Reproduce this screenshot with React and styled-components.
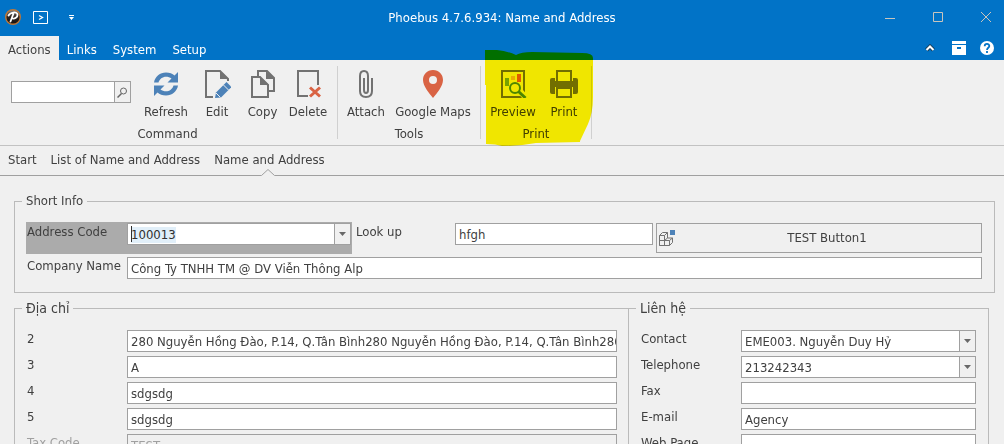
import React, { useEffect, useRef } from "react";
import styled, { createGlobalStyle, css } from "styled-components";

const blue = "#0173c7";
const panel = "#f0f0f0";
const line = "#a0a0a0";
const frame = "#bababa";
const ink = "#404040";
const iconGray = "#727272";
const iconBlue = "#4d82b8";
const iconRed = "#d96344";

const GlobalStyle = createGlobalStyle`
  *, *::before, *::after { box-sizing: border-box; }
  body { margin: 0; background: ${panel}; }
  body, button, input, select {
    font-family: "DejaVu Sans Condensed", "Noto Sans", sans-serif;
    font-size: 13px;
    line-height: 16px;
    color: ${ink};
  }
  button { border: 0; padding: 0; background: none; cursor: pointer; }
  svg { display: block; flex: none; }
`;

const Window = styled.div`
  display: flex;
  flex-direction: column;
  height: 100vh;
  overflow: hidden;
  background: ${panel};
`;

const TitleBar = styled.header`
  display: grid;
  grid-template-columns: 1fr auto 1fr;
  align-items: center;
  height: 36px;
  flex: none;
  padding-bottom: 2px;
  background: ${blue};
  color: #fff;
`;

const QuickAccess = styled.div`
  display: flex;
  align-items: center;
  padding-left: 5px;
`;

const QuickButton = styled.button`
  display: flex;
  margin-left: ${(p) => p.$gap || 0}px;
  color: #fff;
`;

const WindowTitle = styled.h1`
  margin: 0;
  padding-top: 2px;
  font-size: 13px;
  font-weight: 400;
`;

const WindowButtons = styled.div`
  display: flex;
  justify-content: flex-end;
  gap: 12px;
`;

const WindowButton = styled.button`
  display: flex;
  justify-content: center;
  align-items: center;
  width: 36px;
  height: 32px;
  color: #c9c5bd;
`;

const TabBar = styled.nav`
  display: flex;
  height: 24px;
  flex: none;
  background: ${blue};
`;

const Tab = styled.button`
  padding: 3px 8px 0;
  color: #fff;
  ${(p) =>
    p.$active &&
    css`
      background: ${panel};
      color: ${ink};
    `}
`;

const TabTools = styled.div`
  display: flex;
  align-items: center;
  gap: 14px;
  margin-left: auto;
  padding-right: 10px;
`;

const Ribbon = styled.section`
  display: flex;
  height: 86px;
  flex: none;
  padding-top: 6px;
  border-bottom: 1px solid #c2c2c2;
`;

const Group = styled.div`
  position: relative;
  display: flex;
  flex-direction: column;
  height: 73px;
  padding: 0 4px 0 ${(p) => p.$pad}px;
  border-right: 1px solid #d0d0d0;
`;

const GroupItems = styled.div`
  display: flex;
  flex: none;
  height: 60px;
`;

const GroupLabel = styled.div`
  text-align: center;
`;

const RibbonButton = styled.button`
  display: flex;
  flex-direction: column;
  align-items: center;
  width: ${(p) => p.$width}px;
  padding-top: 4px;
  gap: 6px;
  white-space: nowrap;
`;

const SearchBox = styled.div`
  display: flex;
  width: 120px;
  height: 22px;
  margin: 15px 9px 0;
  border: 1px solid ${line};
`;

const SearchInput = styled.input`
  flex: 1;
  min-width: 0;
  border: 0;
  padding: 0 4px;
  outline: 0;
  background: #fff;
`;

const EndButton = styled.button`
  display: flex;
  justify-content: center;
  align-items: center;
  width: 16px;
  flex: none;
  border-left: 1px solid ${line};
  background: ${panel};
`;

const Marker = styled.svg`
  position: absolute;
  left: 3px;
  top: -17px;
  mix-blend-mode: multiply;
  pointer-events: none;
`;

const Pages = styled.nav`
  display: flex;
  gap: 14px;
  height: 30px;
  flex: none;
  padding: 6px 8px 0;
  border-bottom: 1px solid ${line};
`;

const PageLink = styled.a`
  position: relative;
  color: ${ink};
  text-decoration: none;
`;

const Pointer = styled.svg`
  position: absolute;
  left: 50%;
  bottom: -1px;
  margin-left: -8px;
`;

const Form = styled.main`
  padding: 17px 9px 0 14px;
`;

const Frame = styled.fieldset`
  min-width: 0;
  margin: 0;
  border: 1px solid ${frame};
  padding: 13px 12px 13px 11px;
`;

const Legend = styled.legend`
  padding: 0 4px;
  margin-left: -4px;
  font-size: ${(p) => (p.$large ? 14 : 13)}px;
`;

const TopRow = styled.div`
  display: grid;
  grid-template-columns: 326fr 298fr 326fr;
  gap: 3px;
  margin-bottom: 3px;
`;

const Columns = styled.div`
  display: grid;
  grid-template-columns: 614fr 361fr;
  margin: 7px 6px 0 0;
`;

const LeftFrame = styled(Frame)`
  padding: 14px 11px 14px 11px;
  border-right: 0;
`;

const RightFrame = styled(Frame)`
  padding: 14px 12px 14px 11px;
`;

const Rows = styled.div`
  display: grid;
  gap: 4px;
`;

const Field = styled.div`
  display: flex;
  align-items: flex-start;
  min-width: 0;
  ${(p) =>
    p.$current &&
    css`
      padding: 1px 1px 9px 0;
      background: #ababab;
    `}
  ${(p) => p.$inset && "padding-top: 1px;"}
`;

const Label = styled.label`
  width: ${(p) => p.$width || 101}px;
  flex: none;
  padding: 1px 0 0 1px;
  white-space: nowrap;
  color: ${(p) => (p.$muted ? "#a0a0a0" : ink)};
`;

const Control = styled.div`
  position: relative;
  display: flex;
  flex: 1;
  min-width: 0;
  height: 22px;
  border: 1px solid ${line};
  background: ${(p) => (p.$muted ? panel : "#fff")};
`;

const TextInput = styled.input`
  flex: 1;
  width: 100%;
  min-width: 0;
  border: 0;
  padding: 1px 0 0 3px;
  outline: 0;
  background: transparent;
  &::selection { background: #e1eff9; color: #303030; }
  &:disabled { color: #a0a0a0; }
`;

const TextCaret = styled.span`
  position: absolute;
  left: 3px;
  top: 2px;
  width: 1px;
  height: 16px;
  background: #303030;
`;

const Select = styled.select`
  appearance: none;
  flex: 1;
  width: 100%;
  border: 0;
  border-radius: 0;
  outline: 0;
  padding: 1px 20px 0 3px;
  background: transparent;
`;

const SelectArrow = styled.span`
  position: absolute;
  right: 0;
  top: 0;
  bottom: 0;
  display: flex;
  justify-content: center;
  align-items: center;
  width: 16px;
  border-left: 1px solid ${line};
  background: ${panel};
  pointer-events: none;
`;

const CommandButton = styled.button`
  display: grid;
  grid-template-columns: 16px 1fr;
  align-items: center;
  height: 30px;
  margin-top: 1px;
  padding: 0 2px;
  border: 1px solid ${line};
`;

const DownArrow = () => (
  <svg width="7" height="4" viewBox="0 0 7 4"><path d="M0 0h7L3.500 4z" fill="#686868" /></svg>
);

const icons = {
  refresh: (
    <svg width="28" height="28" viewBox="0 0 28 28" fill={iconBlue}>
      <path d="M2 12.500C3 6.500 8 2.500 14 2.500c3.500 0 6.500 1.200 8.500 3L26 2v10.500H15.500l4-4C18 7.300 16 6.700 14 6.700c-3.500 0-6.500 2.300-7.500 5.800z" />
      <path d="M26 15.500c-1 6-6 10-12 10-3.500 0-6.500-1.200-8.500-3L2 26V15.500h10.500l-4 4c1.500 1.200 3.500 1.800 5.500 1.800 3.500 0 6.500-2.300 7.500-5.800z" />
    </svg>
  ),
  edit: (
    <svg width="28" height="28" viewBox="0 0 28 28">
      <path d="M10 27H3V1h14l8 8v2" fill="none" stroke={iconGray} strokeWidth="2" />
      <path d="M17 1v8h9z" fill={iconGray} />
      <path d="M12 28l1-5.500L23.500 12l5 5L18 27.500z" fill={iconBlue} />
      <path d="M20.500 15l5 5M13 23l4.500 4.500" stroke={panel} strokeWidth="1" />
    </svg>
  ),
  copy: (
    <svg width="28" height="28" viewBox="0 0 28 28">
      <path d="M9 7V1h9l7 7v13h-6" fill="none" stroke={iconGray} strokeWidth="2" />
      <path d="M17 1v8h9z" fill={iconGray} />
      <path d="M3 7h8l8 8v12H3z" fill={panel} stroke={iconGray} strokeWidth="2" />
      <path d="M11 7v8h9z" fill={iconGray} />
    </svg>
  ),
  remove: (
    <svg width="28" height="28" viewBox="0 0 28 28">
      <path d="M14 26H4V1h20v14" fill="none" stroke={iconGray} strokeWidth="2" />
      <path d="M16 17.500l10 9M26 17.500l-10 9" stroke={iconRed} strokeWidth="3" />
    </svg>
  ),
  attach: (
    <svg width="28" height="28" viewBox="0 0 28 28" fill="none" stroke={iconGray} strokeWidth="2">
      <path d="M20 8v13c0 4-2 6-6 6s-6-2-6-6V6c0-3 1-5 4-5s4 2 4 5v14c0 4-4 4-4 0V8" />
    </svg>
  ),
  map: (
    <svg width="28" height="28" viewBox="0 0 28 28">
      <path fillRule="evenodd" d="M14 0C8 0 4 4.500 4 10c0 6 6 13 10 18 4-5 10-12 10-18C24 4.500 20 0 14 0zm0 6a4 4 0 1 1 0 8 4 4 0 0 1 0-8z" fill={iconRed} />
    </svg>
  ),
  preview: (
    <svg width="28" height="28" viewBox="0 0 28 28">
      <path d="M3 1h22v26H3z" fill="none" stroke={iconGray} strokeWidth="2" />
      <path d="M6 8h4v8H6z" fill="#76a83c" />
      <path d="M12 6h4v4h-4z" fill="#e9b527" />
      <path d="M18 4h4v8h-4z" fill="#e0603c" />
      <path d="M20 20l8 9" stroke="#f0f0f0" strokeWidth="6" />
      <circle cx="16" cy="18" r="5" fill="#f0f0f0" stroke="#4d8c3c" strokeWidth="2" />
      <path d="M19.500 21.500l7 6.500" stroke="#4d8c3c" strokeWidth="3" />
    </svg>
  ),
  print: (
    <svg width="28" height="28" viewBox="0 0 28 28">
      <path d="M0 10q0-2 2-2h24q2 0 2 2v12q0 2-2 2H2q-2 0-2-2z" fill={iconGray} />
      <path d="M5 0h18v11H5zM5 17h18v11H5z" fill={panel} />
      <path d="M7 12V1h14v11M7 18h14v9H7z" fill={panel} stroke={iconGray} strokeWidth="2" />
      <path d="M5 11h18v6H5z" fill={iconGray} />
    </svg>
  ),
};

const groups = [
  {
    label: "Command",
    pad: 2,
    search: true,
    items: [["Refresh", "refresh", 52], ["Edit", "edit", 50], ["Copy", "copy", 41], ["Delete", "remove", 50]],
  },
  { label: "Tools", pad: 4, items: [["Attach", "attach", 48], ["Google Maps", "map", 86]] },
  { label: "Print", pad: 4, marked: true, items: [["Preview", "preview", 56], ["Print", "print", 46]] },
];

const longAddress = "280 Nguyễn Hồng Đào, P.14, Q.Tân Bình";

const addressRows = [
  { label: "2", value: longAddress + longAddress + "280" },
  { label: "3", value: "A" },
  { label: "4", value: "sdgsdg" },
  { label: "5", value: "sdgsdg" },
  { label: "Tax Code", value: "TEST", muted: true },
];

const contactRows = [
  { label: "Contact", value: "EME003. Nguyễn Duy Hỷ", select: true },
  { label: "Telephone", value: "213242343", select: true },
  { label: "Fax", value: "" },
  { label: "E-mail", value: "Agency" },
  { label: "Web Page", value: "" },
];

function FormField({ id, label, value, select, muted, inset, labelWidth }) {
  return (
    <Field $inset={inset}>
      <Label htmlFor={id} $muted={muted} $width={labelWidth}>{label}</Label>
      <Control $muted={muted}>
        {select ? (
          <>
            <Select id={id} defaultValue={value}><option>{value}</option></Select>
            <SelectArrow><DownArrow /></SelectArrow>
          </>
        ) : (
          <TextInput id={id} defaultValue={value} disabled={muted} />
        )}
      </Control>
    </Field>
  );
}

function AddressCode() {
  const ref = useRef(null);
  useEffect(() => {
    ref.current.focus();
    ref.current.select();
  }, []);
  return (
    <Field $current>
      <Label htmlFor="code">Address Code</Label>
      <Control>
        <TextInput id="code" ref={ref} role="combobox" aria-expanded="false" defaultValue="100013" />
        <TextCaret />
        <EndButton aria-label="Open list"><DownArrow /></EndButton>
      </Control>
    </Field>
  );
}

export default function App() {
  return (
    <Window>
      <GlobalStyle />
      <TitleBar>
        <QuickAccess>
          <svg width="16" height="16" viewBox="0 0 16 16">
            <defs>
              <linearGradient id="ball" x1="0" y1="0" x2="0" y2="1">
                <stop offset="0" stopColor="#8a8a8a" />
                <stop offset=".5" stopColor="#2c2420" />
                <stop offset="1" stopColor="#151010" />
              </linearGradient>
            </defs>
            <circle cx="8" cy="8" r="7.300" fill="url(#ball)" stroke="#c07838" strokeWidth="1.400" />
            <path d="M3.500 6.500C5 3.500 12 2 12.500 5.500 12.800 8.500 9.500 10 7.500 9.500M8.500 4.500L5.500 12.500" fill="none" stroke="#fff" strokeWidth="1.800" strokeLinecap="round" />
          </svg>
          <QuickButton $gap={12} aria-label="Run">
            <svg width="15" height="13" viewBox="0 0 15 13" fill="none" stroke="#fff">
              <path d="M.5.5h14v12H.5z" />
              <path d="M6 4.500l3.500 2-3.500 2" strokeWidth="1.300" />
            </svg>
          </QuickButton>
          <QuickButton $gap={21} aria-label="Customize toolbar">
            <svg width="5" height="5" viewBox="0 0 5 5" fill="#fff"><path d="M0 0h5v1H0zM0 2h5L2.500 5z" /></svg>
          </QuickButton>
        </QuickAccess>
        <WindowTitle>Phoebus 4.7.6.934: Name and Address</WindowTitle>
        <WindowButtons>
          <WindowButton aria-label="Minimize">
            <svg width="10" height="10" stroke="currentColor"><path d="M0 6.500h10" /></svg>
          </WindowButton>
          <WindowButton aria-label="Maximize">
            <svg width="10" height="10" fill="none" stroke="currentColor"><path d="M.5.5h9v9h-9z" /></svg>
          </WindowButton>
          <WindowButton aria-label="Close">
            <svg width="10" height="10" stroke="currentColor"><path d="M0 0l10 10M10 0L0 10" /></svg>
          </WindowButton>
        </WindowButtons>
      </TitleBar>

      <TabBar>
        <Tab $active>Actions</Tab>
        <Tab>Links</Tab>
        <Tab>System</Tab>
        <Tab>Setup</Tab>
        <TabTools>
          <QuickButton aria-label="Collapse ribbon">
            <svg width="10" height="8" viewBox="0 0 10 8" fill="none">
              <path d="M1.500 6L5 2.500 8.500 6" stroke="#16405f" strokeWidth="4" />
              <path d="M1.500 6L5 2.500 8.500 6" stroke="#fff" strokeWidth="2" />
            </svg>
          </QuickButton>
          <QuickButton $gap={3} aria-label="Archive">
            <svg width="14" height="14" viewBox="0 0 14 14" fill="#fff">
              <path d="M0 0h14v3H0zM0 4h14v10H0z" /><path d="M5 6h4v2H5z" fill={blue} />
            </svg>
          </QuickButton>
          <QuickButton aria-label="Help">
            <svg width="14" height="14" viewBox="0 0 14 14">
              <circle cx="7" cy="7" r="7" fill="#fff" />
              <path d="M4.700 5.300C4.700 2.200 9.300 2.300 9.300 5 9.300 6.800 7 6.800 7 9M7 10v2" fill="none" stroke={blue} strokeWidth="1.800" />
            </svg>
          </QuickButton>
        </TabTools>
      </TabBar>

      <Ribbon>
        {groups.map((group) => (
          <Group key={group.label} $pad={group.pad}>
            <GroupItems>
              {group.search && (
                <SearchBox>
                  <SearchInput aria-label="Search" />
                  <EndButton aria-label="Find">
                    <svg width="11" height="11" viewBox="0 0 11 11" fill="none" stroke="#666">
                      <circle cx="6.500" cy="4" r="3" /><path d="M4.500 6.500L.5 10.500" strokeWidth="1.500" />
                    </svg>
                  </EndButton>
                </SearchBox>
              )}
              {group.items.map(([label, icon, width]) => (
                <RibbonButton key={label} $width={width}>{icons[icon]}{label}</RibbonButton>
              ))}
            </GroupItems>
            <GroupLabel>{group.label}</GroupLabel>
            {group.marked && (
              <Marker width="110" height="98" viewBox="0 0 110 98" aria-hidden="true">
                <path
                  d="M1 1H13Q23 2 32 6Q37 3 48 3L98 4Q109 4 109 9V48Q109 64 104 75L96 92V93L52 94Q36 97 18 97Q12 95 2 95V36H1Z"
                  fill="#fff500"
                />
              </Marker>
            )}
          </Group>
        ))}
      </Ribbon>

      <Pages>
        <PageLink href="#start">Start</PageLink>
        <PageLink href="#list">List of Name and Address</PageLink>
        <PageLink href="#address" aria-current="page">
          Name and Address
          <Pointer width="14" height="7" viewBox="0 0 14 7">
            <path d="M0 7L7 0l7 7z" fill={panel} />
            <path d="M.5 6.500L7 .5l6.500 6" fill="none" stroke={line} />
          </Pointer>
        </PageLink>
      </Pages>

      <Form>
        <Frame>
          <Legend>Short Info</Legend>
          <TopRow>
            <AddressCode />
            <FormField id="lookup" label="Look up" value="hfgh" labelWidth={100} inset />
            <CommandButton>
              <svg width="16" height="16" viewBox="0 0 16 16" fill="none" stroke={iconGray}>
                <path d="M.5 5.500h5v10h-5zM.5 10.500h10v5h-10M5.500 10.500l3-2.500h5l-3 2.500M.5 5.500l3-3h5l-3 3M8.500 2.500V8M10.500 15.500l3-3V8" />
                <path d="M11 0h5v5h-5z" fill={iconBlue} stroke="none" />
              </svg>
              <span>TEST Button1</span>
            </CommandButton>
          </TopRow>
          <FormField id="company" label="Company Name" value="Công Ty TNHH TM @ DV Viễn Thông Alp" />
        </Frame>
        <Columns>
          <LeftFrame>
            <Legend $large>Địa chỉ</Legend>
            <Rows>
              {addressRows.map((row) => <FormField key={row.label} id={"address-" + row.label.replace(" ", "")} {...row} />)}
            </Rows>
          </LeftFrame>
          <RightFrame>
            <Legend $large>Liên hệ</Legend>
            <Rows>
              {contactRows.map((row) => <FormField key={row.label} id={"contact-" + row.label.replace(" ", "")} {...row} />)}
            </Rows>
          </RightFrame>
        </Columns>
      </Form>
    </Window>
  );
}
